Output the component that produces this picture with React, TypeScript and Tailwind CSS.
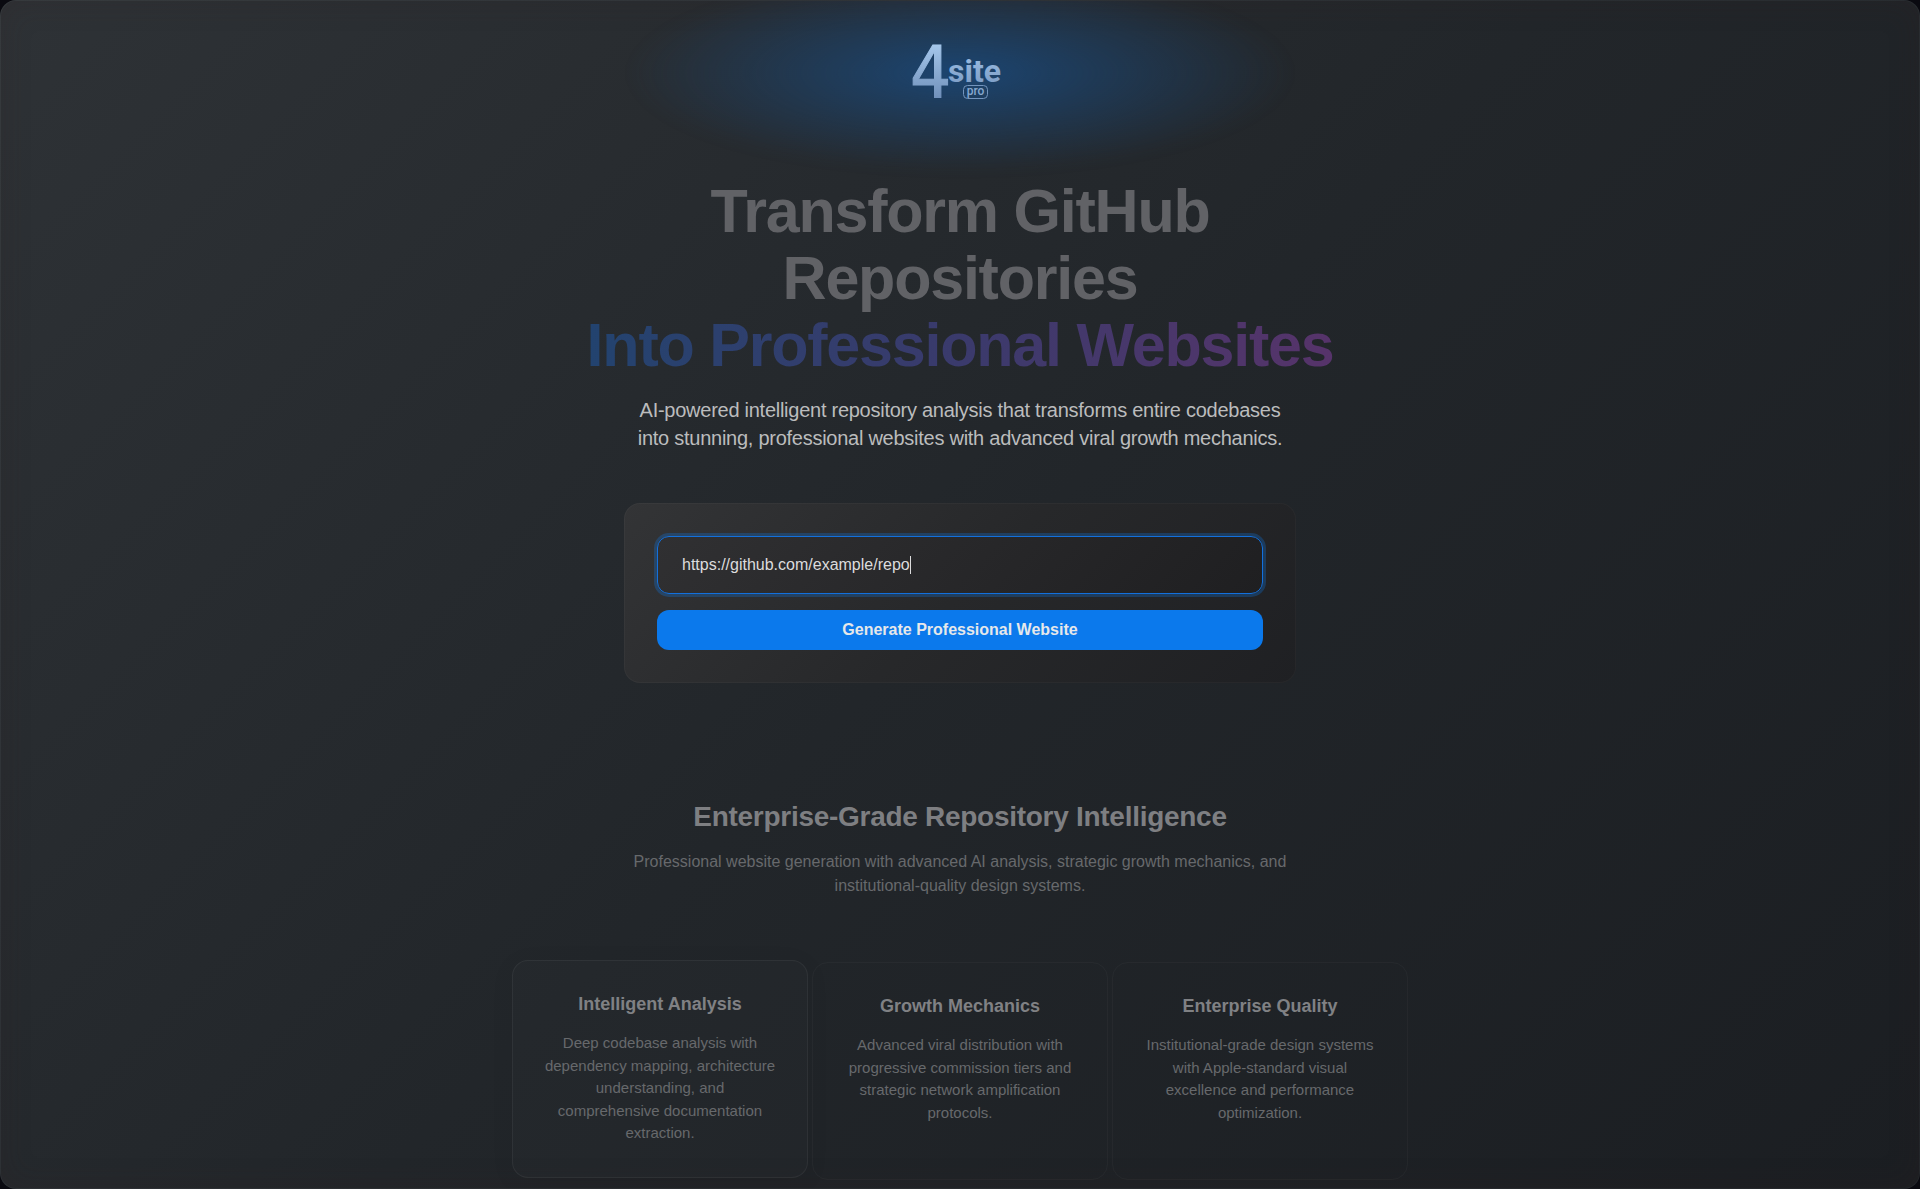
import { useState } from "react";

const features = [
  {
    title: "Intelligent Analysis",
    text: "Deep codebase analysis with dependency mapping, architecture understanding, and comprehensive documentation extraction.",
    active: true,
  },
  {
    title: "Growth Mechanics",
    text: "Advanced viral distribution with progressive commission tiers and strategic network amplification protocols.",
    active: false,
  },
  {
    title: "Enterprise Quality",
    text: "Institutional-grade design systems with Apple-standard visual excellence and performance optimization.",
    active: false,
  },
];

function Logo() {
  return (
    <svg width="96" height="64" viewBox="0 0 96 64" role="img" aria-label="4site pro" className="relative overflow-visible">
      <defs>
        <linearGradient id="logo-ink" gradientUnits="userSpaceOnUse" x1="0" y1="4" x2="0" y2="60">
          <stop offset="0" stopColor="#a6c8ec" />
          <stop offset="1" stopColor="#7090ba" />
        </linearGradient>
      </defs>
      <text x="-2" y="58" fontSize="72" fill="url(#logo-ink)" stroke="url(#logo-ink)" strokeWidth="1" className="font-['DejaVu_Sans_Condensed',sans-serif]">4</text>
      <text x="36" y="43" fontSize="32" fontWeight="700" fill="url(#logo-ink)" className="font-[Roboto,sans-serif]">site</text>
      <rect x="51.5" y="46.5" width="24" height="13" rx="4" fill="none" stroke="#7394bd" />
      <text x="63.5" y="56" fontSize="12" fontWeight="500" textAnchor="middle" fill="#86a7cf" className="font-[Roboto,sans-serif]">pro</text>
    </svg>
  );
}

function RepoForm() {
  const [url, setUrl] = useState("https://github.com/example/repo");
  return (
    <form
      onSubmit={(e) => e.preventDefault()}
      className="mt-[51px] flex w-full max-w-2xl flex-col gap-4 rounded-2xl border border-white/3 bg-linear-135 from-[#333436] via-[#27282a] to-[#1f2023] bg-origin-border p-8"
    >
      <div className="relative">
        <input
          type="url"
          aria-label="GitHub repository URL"
          value={url}
          onChange={(e) => setUrl(e.target.value)}
          className="h-[58px] w-full rounded-xl border border-[#1370dc] bg-linear-135 from-[#303032] to-[#1f1f21] px-6 text-base text-[#dcdcdd] caret-transparent outline-none ring-3 ring-[#0a84ff]/25"
        />
        <div aria-hidden="true" className="pointer-events-none absolute inset-y-0 left-[25px] flex items-center text-base">
          <span className="invisible">{url}</span>
          <span className="h-[18px] w-px bg-[#dcdcdd]" />
        </div>
      </div>
      <button type="submit" className="h-10 w-full rounded-xl bg-[#0b79ec] text-base font-semibold text-[#e6e8ea]">
        Generate Professional Website
      </button>
    </form>
  );
}

export default function App() {
  return (
    <div className="min-h-screen bg-[#0a0a10] font-['Liberation_Sans',Arial,sans-serif]">
      <main className="relative flex min-h-screen flex-col items-center overflow-hidden rounded-2xl border border-white/4 bg-linear-135 from-[#2e3236] via-[#22262a] to-[#1b1e22] bg-origin-border pb-2 shadow-[inset_0_0_30px_rgba(50,30,30,0.22)]">
        <header className="relative flex w-full max-w-2xl justify-center pt-[38px]">
          <div className="absolute inset-x-0 top-[-28px] h-[200px] bg-[radial-gradient(ellipse,rgba(22,84,150,0.65),transparent_70%)] blur-[6px]" />
          <Logo />
        </header>

        <h1 className="mt-[75px] text-center text-[61px] leading-[67px] font-bold tracking-[-0.02em] text-[#616266]">
          Transform GitHub
          <br />
          Repositories
          <span className="block bg-linear-to-r from-[#22436f] via-[#3a3a6c] to-[#56336a] bg-clip-text text-transparent">
            Into Professional Websites
          </span>
        </h1>
        <p className="mt-[17px] max-w-[660px] text-center text-xl leading-7 tracking-[-0.013em] text-[#bbbcbd]">
          AI-powered intelligent repository analysis that transforms entire codebases into stunning, professional websites with advanced viral growth mechanics.
        </p>

        <RepoForm />

        <section className="mt-[117px] flex w-full flex-col items-center">
          <h2 className="text-center text-[28px] leading-[34px] font-bold tracking-[-0.01em] text-[#7e7f82]">
            Enterprise-Grade Repository Intelligence
          </h2>
          <p className="mt-4 max-w-[660px] text-center text-base text-[#67696c]">
            Professional website generation with advanced AI analysis, strategic growth mechanics, and institutional-quality design systems.
          </p>
          <div className="mt-16 grid w-full max-w-[896px] grid-cols-3 gap-1">
            {features.map((f) => (
              <article
                key={f.title}
                className={
                  f.active
                    ? "-translate-y-0.5 rounded-2xl border border-white/5 bg-white/1 px-[31px] py-8 text-center shadow-[0_4px_24px_rgba(0,0,0,0.06)]"
                    : "rounded-2xl border border-white/3 px-[31px] py-8 text-center"
                }
              >
                <h3 className="text-lg leading-[22px] font-bold text-[#808184]">{f.title}</h3>
                <p className="mt-[17px] text-[15px] leading-normal text-[#67696c]">{f.text}</p>
              </article>
            ))}
          </div>
        </section>
      </main>
    </div>
  );
}
